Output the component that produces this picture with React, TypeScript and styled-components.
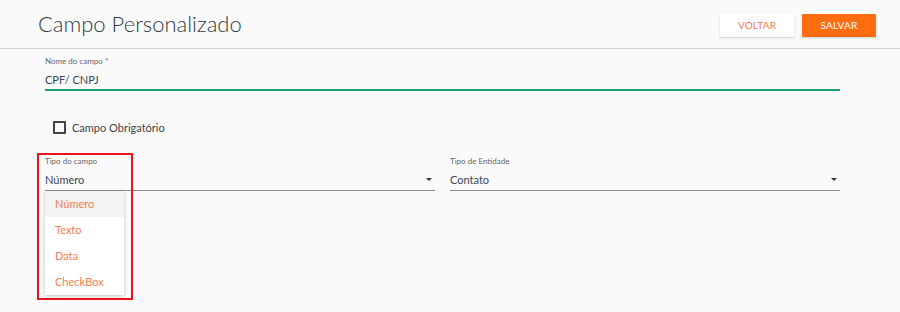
import React, { useState } from "react";
import styled, { createGlobalStyle } from "styled-components";

const tipos = ["Número", "Texto", "Data", "CheckBox"];

const GlobalStyle = createGlobalStyle`
  body {
    margin: 0;
    background: #fafafa;
    font-family: Lato, "Open Sans", sans-serif;
  }
`;

const App = () => {
  const [obrigatorio, setObrigatorio] = useState(false);
  const [tipo] = useState("Número");

  return (
    <Page>
      <GlobalStyle />
      <Header>
        <Title>Campo Personalizado</Title>
        <Actions>
          <Button>VOLTAR</Button>
          <Button primary>SALVAR</Button>
        </Actions>
      </Header>
      <Form>
        <Field>
          <Label>Nome do campo *</Label>
          <Value focused>CPF/ CNPJ</Value>
        </Field>
        <CheckRow onClick={() => setObrigatorio(!obrigatorio)}>
          <Box checked={obrigatorio} />
          <CheckLabel>Campo Obrigatório</CheckLabel>
        </CheckRow>
        <SelectRow>
          <Field>
            <Label>Tipo do campo</Label>
            <Value>
              {tipo}
              <Caret />
            </Value>
            <Menu>
              {tipos.map((t) => (
                <MenuItem key={t} active={t === tipo}>
                  {t}
                </MenuItem>
              ))}
            </Menu>
            <Highlight />
          </Field>
          <Field>
            <Label>Tipo de Entidade</Label>
            <Value>
              Contato
              <Caret />
            </Value>
          </Field>
        </SelectRow>
      </Form>
    </Page>
  );
};

const Page = styled.div`
  width: 900px;
  height: 312px;
  overflow: hidden;
`;

const Header = styled.div`
  height: 49px;
  box-sizing: border-box;
  display: flex;
  align-items: center;
  justify-content: space-between;
  padding: 0 24px 0 38px;
  border-bottom: 1px solid #d2d2d2;
`;

const Title = styled.h1`
  margin: 0 0 1px;
  font-size: 22px;
  font-weight: 300;
  color: #2e3a48;
`;

const Actions = styled.div`
  display: flex;
  gap: 8px;
  margin-top: 2px;
`;

const Button = styled.button<{ primary?: boolean }>`
  width: 74px;
  height: 23px;
  border: none;
  border-radius: 1px;
  font-family: inherit;
  font-size: 10px;
  letter-spacing: 0.2px;
  cursor: pointer;
  background: ${(p) => (p.primary ? "#ff6c12" : "#ffffff")};
  color: ${(p) => (p.primary ? "#ffffff" : "#f57a50")};
  box-shadow: 0 1px 2px rgba(0, 0, 0, 0.18);
`;

const Form = styled.div`
  width: 795px;
  padding: 7px 0 0 45px;
`;

const Field = styled.div`
  position: relative;
  flex: 1;
`;

const Label = styled.div`
  font-size: 8px;
  color: #666;
  line-height: 10px;
`;

const Value = styled.div<{ focused?: boolean }>`
  position: relative;
  height: 25px;
  box-sizing: border-box;
  padding-top: 7px;
  font-size: 11px;
  color: #3a4856;
  border-bottom: ${(p) => (p.focused ? "2px solid #1f9d70" : "1px solid #8c8c8c")};
`;

const Caret = styled.span`
  position: absolute;
  right: 3px;
  top: 12px;
  border-left: 3px solid transparent;
  border-right: 3px solid transparent;
  border-top: 3px solid #333;
`;

const CheckRow = styled.label`
  display: flex;
  align-items: center;
  gap: 6px;
  margin: 29px 0 0 8px;
  height: 14px;
  cursor: pointer;
`;

const Box = styled.span<{ checked: boolean }>`
  width: 9px;
  height: 9px;
  border: 2px solid #444;
  border-radius: 1px;
  background: ${(p) => (p.checked ? "#444" : "transparent")};
`;

const CheckLabel = styled.span`
  font-size: 11px;
  color: #444;
`;

const SelectRow = styled.div`
  display: flex;
  gap: 15px;
  margin-top: 22px;
`;

const Menu = styled.div`
  position: absolute;
  top: 35px;
  left: 0;
  width: 79px;
  background: #fff;
  box-shadow: 0 1px 4px rgba(0, 0, 0, 0.22);
`;

const MenuItem = styled.div<{ active?: boolean }>`
  height: 26px;
  line-height: 26px;
  padding-left: 10px;
  font-size: 11px;
  color: #f58050;
  background: ${(p) => (p.active ? "#f3f3f3" : "#fff")};
`;

const Highlight = styled.div`
  position: absolute;
  top: -3px;
  left: -8px;
  width: 92px;
  height: 143px;
  border: 2px solid #e8141c;
  pointer-events: none;
`;

export default App;
